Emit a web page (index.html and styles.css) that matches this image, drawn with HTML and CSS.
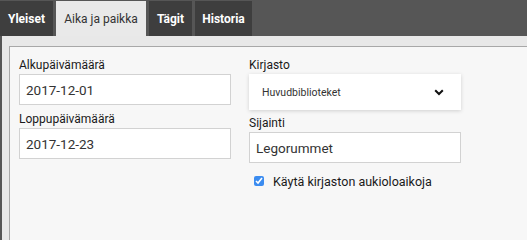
FILE: index.html
```html
<!DOCTYPE html>
<html lang="fi">
<head>
<meta charset="utf-8">
<link rel="stylesheet" href="styles.css">
</head>
<body>
<nav class="tabs">
  <a class="tab tab-1">Yleiset</a>
  <a class="tab tab-2 active">Aika ja paikka</a>
  <a class="tab tab-3">Tägit</a>
  <a class="tab tab-4">Historia</a>
</nav>
<div class="page">
  <div class="panel">
    <div class="col">
      <label class="field">
        <span class="label">Alkupäivämäärä</span>
        <span class="input">2017-12-01</span>
      </label>
      <label class="field">
        <span class="label">Loppupäivämäärä</span>
        <span class="input">2017-12-23</span>
      </label>
    </div>
    <div class="col">
      <div class="field">
        <span class="label">Kirjasto</span>
        <div class="select">
          <span>Huvudbiblioteket</span>
          <svg class="chev" width="10" height="7" viewBox="0 0 10 7"><path d="M1.2 1.2 L5 5 L8.8 1.2" fill="none" stroke="#111" stroke-width="2"/></svg>
        </div>
      </div>
      <label class="field">
        <span class="label">Sijainti</span>
        <span class="input">Legorummet</span>
      </label>
      <label class="check">
        <input type="checkbox" checked>
        <span>Käytä kirjaston aukioloaikoja</span>
      </label>
    </div>
  </div>
</div>
</body>
</html>
```

FILE: styles.css
```css
html, body {
  margin: 0;
}
html {
  background: #e8e8e8;
}
body {
  min-height: 100vh;
  background: #565656;
  font-family: Roboto, "Liberation Sans", sans-serif;
  color: #222;
  display: flex;
  flex-direction: column;
  overflow: hidden;
}
.tabs {
  display: flex;
  gap: 3px;
  padding-top: 1px;
  height: 35px;
  flex: none;
}
.tab {
  background: #3e3e3e;
  color: #fff;
  font-weight: bold;
  font-size: 12px;
  white-space: nowrap;
  display: flex;
  align-items: center;
  justify-content: center;
}
.tab-1 { width: 53px; }
.tab-2 { width: 90px; }
.tab-3 { width: 43px; }
.tab-4 { width: 57px; }
.tab.active {
  background: #e9e9e9;
  color: #333;
  font-weight: normal;
}
.page {
  flex: 1;
  margin-left: 2px;
  background: #e8e8e8;
  padding: 10px 0 0 7px;
  display: flex;
}
.panel {
  flex: 1;
  background: #f7f7f7;
  border-top: 1px solid #a8a8a8;
  border-left: 1px solid #a8a8a8;
  padding: 10px 0 0 9px;
  display: grid;
  grid-template-columns: 212px 212px;
  column-gap: 18px;
  align-content: start;
}
.col {
  display: flex;
  flex-direction: column;
}
.field {
  display: flex;
  flex-direction: column;
}
.label {
  font-size: 12px;
  line-height: 17px;
  height: 17px;
  color: #1a1a1a;
}
.input {
  box-sizing: border-box;
  height: 31px;
  background: #fff;
  border: 1px solid #d2d2d2;
  padding: 0 6px;
  font-size: 13.5px;
  color: #333;
  display: flex;
  align-items: center;
  margin-bottom: 6px;
}
.select {
  box-sizing: border-box;
  height: 36px;
  background: #fff;
  box-shadow: 0 1px 4px rgba(0,0,0,0.16);
  display: flex;
  align-items: center;
  justify-content: space-between;
  padding: 0 17px 0 13px;
  font-size: 10.5px;
  color: #333;
  margin-bottom: 5px;
}
.chev {
  display: block;
}
.check {
  display: flex;
  align-items: center;
  gap: 9px;
  height: 14px;
  margin-top: 5px;
  padding-left: 5px;
  font-size: 12.5px;
  color: #1a1a1a;
}
.check input {
  margin: 0;
  width: 10px;
  height: 10px;
  accent-color: #3b8cf0;
}
```
